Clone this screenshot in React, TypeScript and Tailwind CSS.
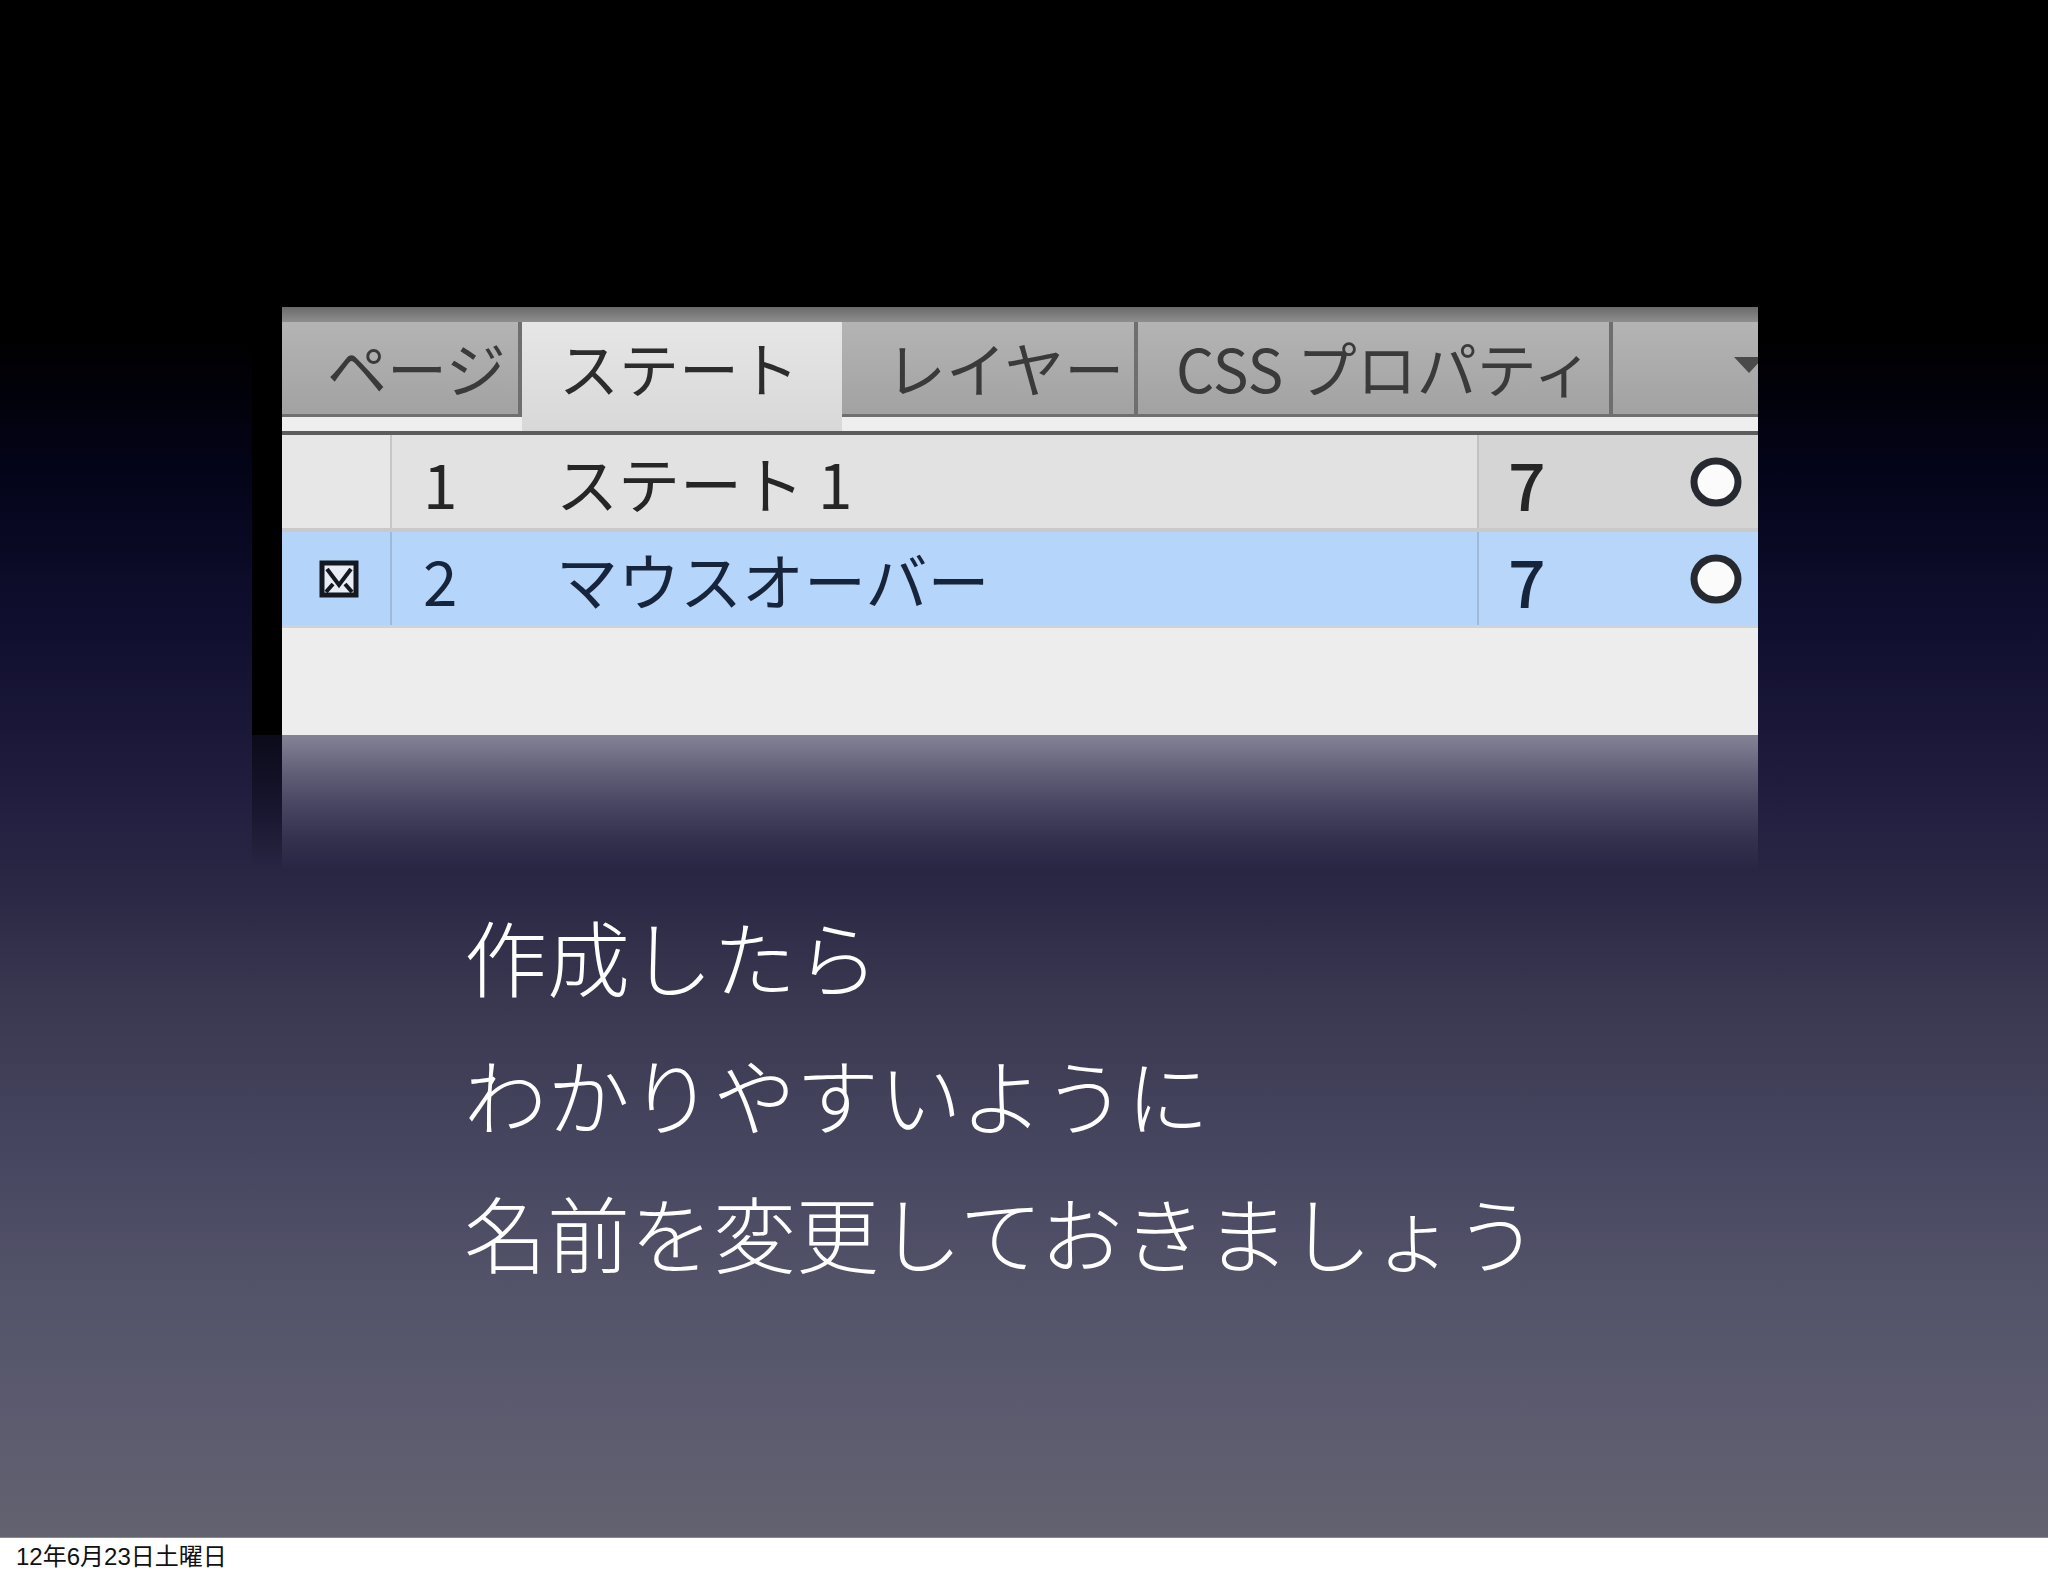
import React from "react";

const jp = { fontFamily: '"Noto Sans CJK JP", "Noto Sans", sans-serif' };

const CheckIcon = () => (
   <svg width="42" height="42" viewBox="0 0 42 42">
      <rect x="4" y="5" width="34" height="32" fill="#e8ecf4" stroke="#141820" strokeWidth="5" />
      <polyline points="9,11 21,27 33,11" fill="none" stroke="#141820" strokeWidth="4" />
      <line x1="8" y1="34" x2="15" y2="26" stroke="#141820" strokeWidth="4" />
      <line x1="34" y1="34" x2="27" y2="26" stroke="#141820" strokeWidth="4" />
   </svg>
);

const Ring = () => (
   <svg width="52" height="50" viewBox="0 0 52 50">
      <ellipse cx="26" cy="25" rx="22" ry="21" fill="#fbfbfb" stroke="#262a30" strokeWidth="7" />
   </svg>
);

const Tab = ({ label, w, pl, active }: { label: string; w: string; pl: string; active?: boolean }) => (
   <div
      className={`${w} ${pl} shrink-0 flex items-start pt-[15px] overflow-hidden whitespace-nowrap text-[60px] leading-none ${
         active
            ? "h-[109px] bg-[linear-gradient(180deg,#e6e6e6,#d8d8d8)] text-[#2c2c2c] relative z-10"
            : "h-[95px] bg-[linear-gradient(180deg,#b4b4b4,#a2a2a2)] text-[#3a3a3a] border-r-[4px] border-b-[3px] border-[#6f6f6f]"
      }`}
   >
      <span className="blur-[0.6px]">{label}</span>
   </div>
);

const Row = ({
   num,
   name,
   selected,
}: {
   num: string;
   name: string;
   selected?: boolean;
}) => (
   <div className={`flex h-[93px] ${selected ? "bg-[#b6d5fa] text-[#16243c]" : "bg-[#e2e2e2] text-[#262626]"}`}>
      <div className={`w-[108px] flex items-center pl-[36px] ${selected ? "bg-[#b5d4f9]" : "bg-[#e7e7e7]"}`}>
         {selected && <CheckIcon />}
      </div>
      <div className={`w-[2px] ${selected ? "bg-[#9fb9da]" : "bg-[#c6c6c6]"}`} />
      <div className="w-[1085px] flex items-center pl-[31px] text-[62px] leading-none blur-[0.6px]">
         <span className="w-[133px]">{num}</span>
         <span>{name}</span>
      </div>
      <div className={`w-[2px] ${selected ? "bg-[#9fb9da]" : "bg-[#c2c2c2]"}`} />
      <div className={`flex-1 flex items-center justify-between pl-[29px] pr-[16px] ${selected ? "bg-[#b8d6fa]" : "bg-[#d5d5d5]"}`}>
         <span className="text-[66px] leading-none font-medium blur-[0.6px]">7</span>
         <Ring />
      </div>
   </div>
);

export default function App() {
   return (
      <div className="w-[2048px] h-[1576px] flex flex-col overflow-hidden" style={jp}>
         <div className="h-[1537px] flex flex-col bg-[linear-gradient(180deg,#000000_0%,#000000_22%,#04041a_31%,#110f30_41%,#1f1c3e_51%,#2c2946_58.7%,#3a3850_65%,#474660_75%,#54546a_84.8%,#5e5d70_94.6%,#63626f_100%)]">
            {/* screenshot of the panel */}
            <div className="mt-[307px] ml-[252px] w-[1506px] h-[428px] flex">
               <div className="w-[30px] bg-black" />
               <div className="flex-1 flex flex-col overflow-hidden bg-[#ededee]">
                  <div className="h-[15px] bg-[linear-gradient(180deg,#6a6a6a,#8e8e8e)]" />
                  <div className="h-[95px] flex items-start bg-[#a4a4a4]">
                     <Tab label="ページ" w="w-[240px]" pl="pl-[45px]" />
                     <Tab label="ステート" w="w-[320px]" pl="pl-[37px]" active />
                     <Tab label="レイヤー" w="w-[296px]" pl="pl-[44px]" />
                     <Tab label="CSS プロパティ" w="w-[475px]" pl="pl-[38px]" />
                     <div className="flex-1 h-[95px] flex items-center justify-end bg-[linear-gradient(180deg,#b4b4b4,#a2a2a2)] border-b-[3px] border-[#6f6f6f] -mr-[6px]">
                        <svg width="30" height="16" viewBox="0 0 30 16" className="blur-[0.5px] -mt-[6px]">
                           <polygon points="0,0 30,0 15,16" fill="#4a4a4a" />
                        </svg>
                     </div>
                  </div>
                  <div className="h-[14px] bg-[#eeeeee]" />
                  <div className="h-[4px] bg-[#5c5c5c]" />
                  <Row num="1" name="ステート 1" />
                  <div className="h-[4px] bg-[#c9c9c9]" />
                  <Row num="2" name="マウスオーバー" selected />
                  <div className="h-[3px] bg-[#cfd2d6]" />
                  <div className="flex-1 bg-[#ededee]" />
               </div>
            </div>

            {/* reflection */}
            <div className="ml-[252px] w-[1506px] h-[135px] flex">
               <div className="w-[30px] bg-[linear-gradient(180deg,rgba(0,0,0,0.55),rgba(0,0,0,0.25)_60%,rgba(0,0,0,0))]" />
               <div className="flex-1 bg-[linear-gradient(180deg,rgba(237,237,242,0.5),rgba(237,237,242,0.32)_28%,rgba(237,237,242,0.19)_52%,rgba(237,237,242,0.07)_78%,rgba(237,237,242,0))]" />
            </div>

            {/* slide text */}
            <div className="mt-[16px] pl-[464px] text-white text-[83px] leading-[138px] font-light">
               <p>作成したら</p>
               <p>わかりやすいように</p>
               <p>名前を変更しておきましょう</p>
            </div>
         </div>

         <div className="h-[39px] bg-white border-t border-[#8a8a8e] flex items-center pl-[16px]">
            <span
               className="text-[24px] leading-none text-[#111]"
               style={{ fontFamily: '"Liberation Sans", "Noto Sans CJK JP", sans-serif' }}
            >
               12年6月23日土曜日
            </span>
         </div>
      </div>
   );
}
